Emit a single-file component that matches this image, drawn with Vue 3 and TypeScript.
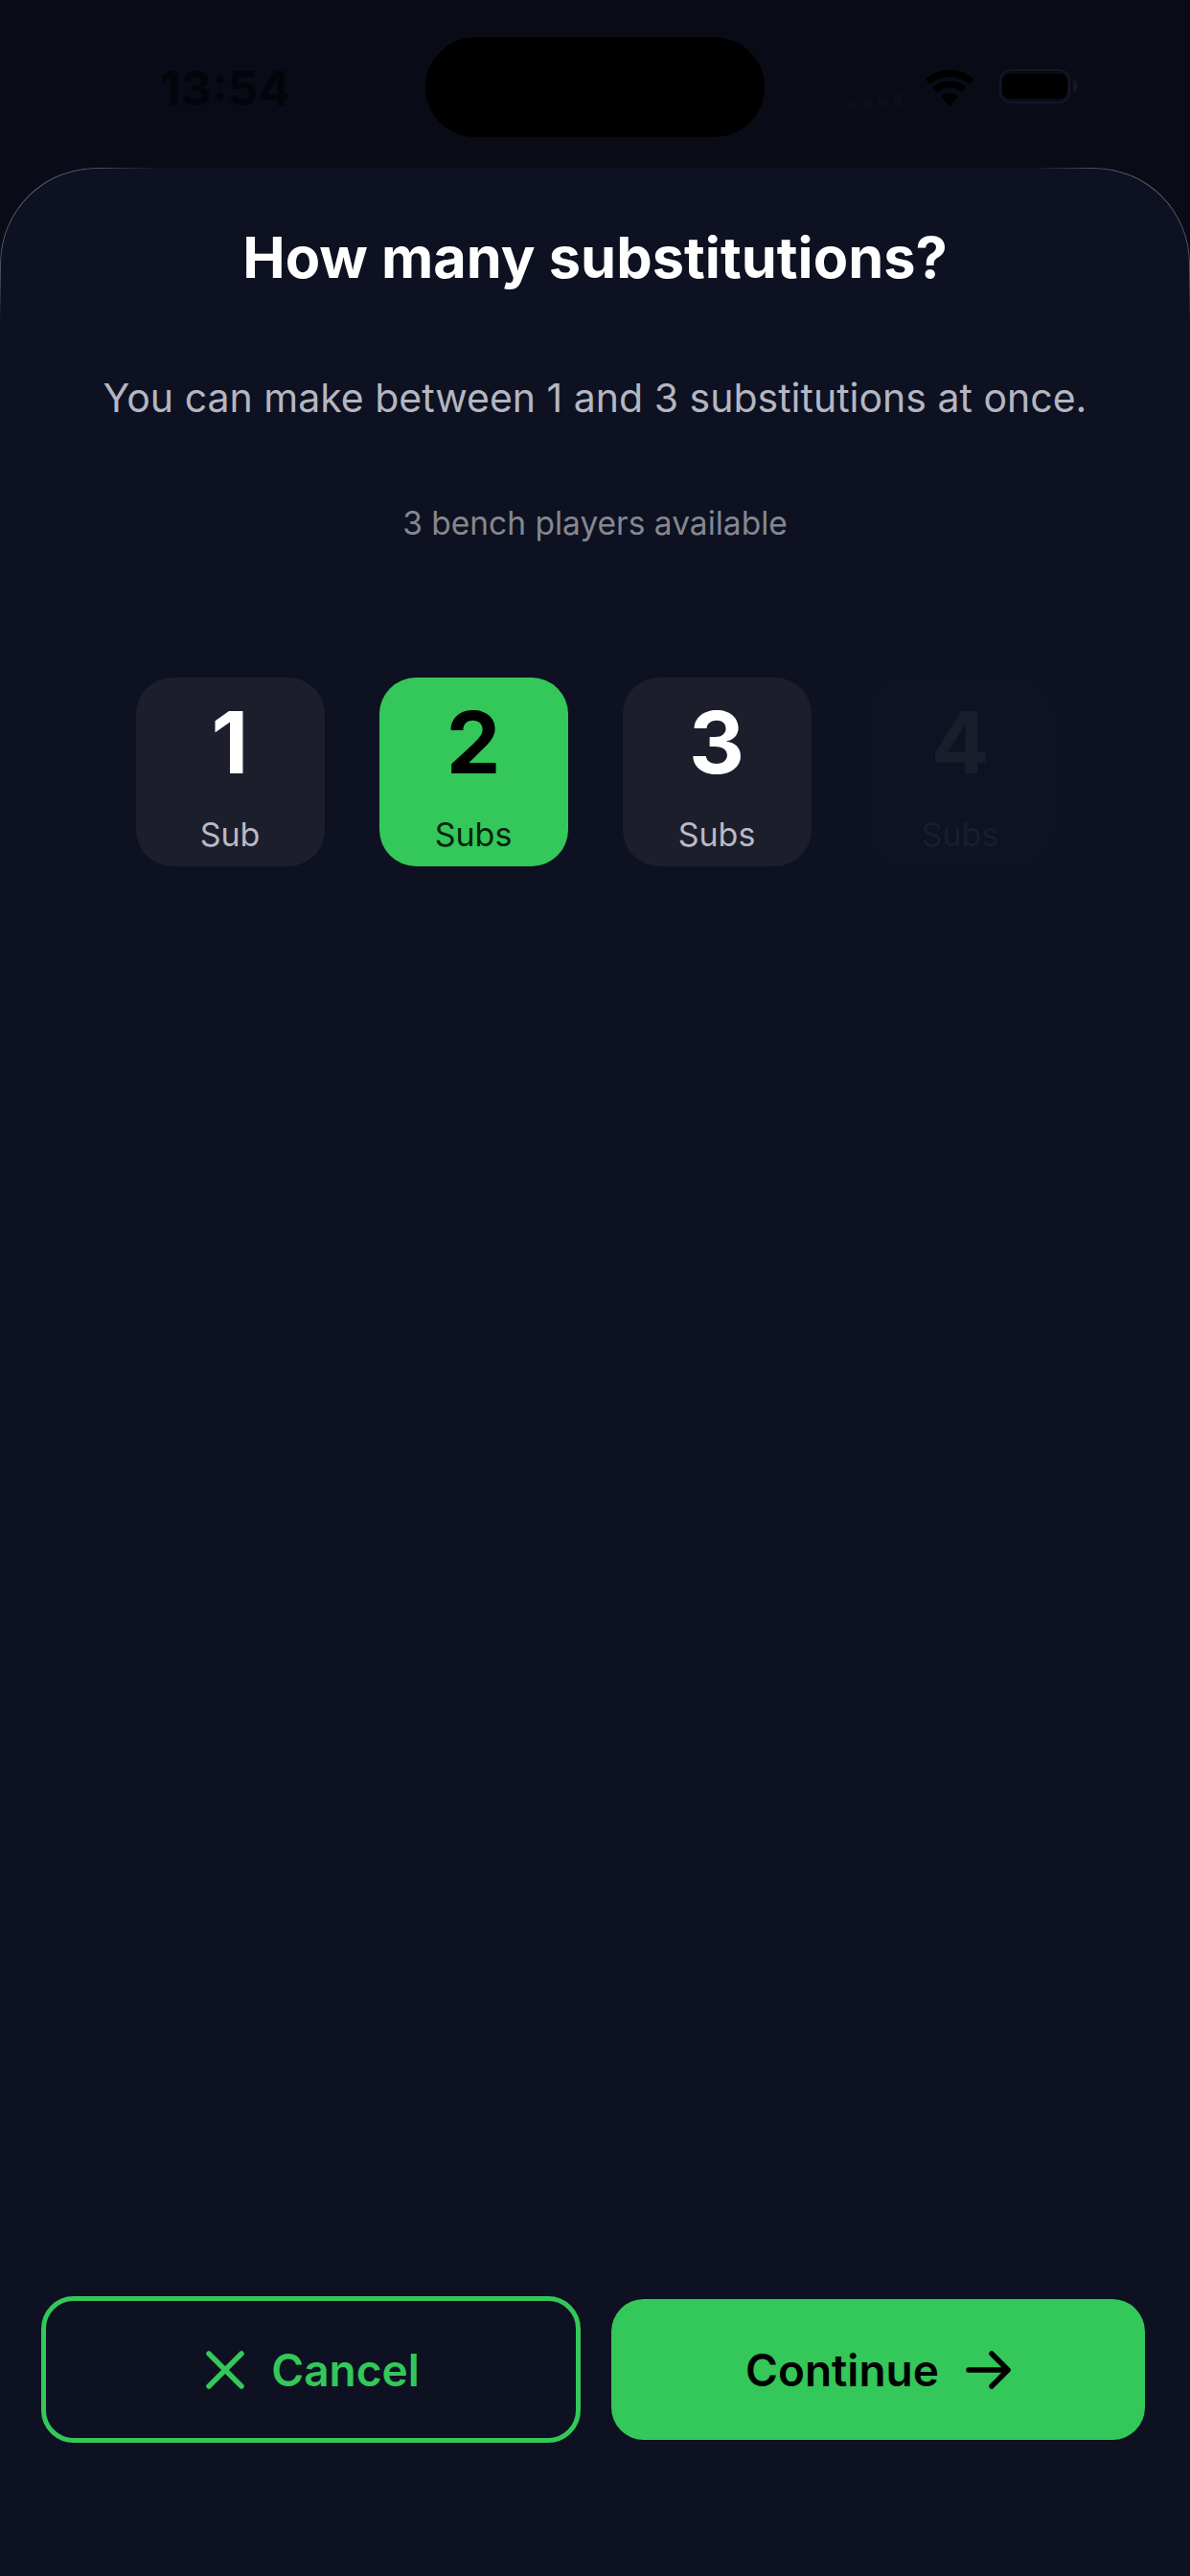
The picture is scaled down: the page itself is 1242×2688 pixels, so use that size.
<script setup lang="ts">
interface Option {
  value: number
  label: string
  selected?: boolean
  disabled?: boolean
}

const options: Option[] = [
  { value: 1, label: 'Sub' },
  { value: 2, label: 'Subs', selected: true },
  { value: 3, label: 'Subs' },
  { value: 4, label: 'Subs', disabled: true },
]
</script>

<template>
  <div class="screen">
    <header class="status">
      <span class="time">13:54</span>
      <div class="island"></div>
      <div class="status-icons">
        <svg class="cell" width="60" height="14" viewBox="0 0 60 14">
          <rect x="0" y="9" width="9" height="5" rx="1" />
          <rect x="16" y="6" width="9" height="8" rx="1" />
          <rect x="32" y="3" width="9" height="11" rx="1" />
          <rect x="48" y="0" width="9" height="14" rx="1" />
        </svg>
        <svg class="wifi" width="52" height="40" viewBox="0 0 52 40">
          <path d="M26 40 L17 29.5 A14 14 0 0 1 35 29.5 Z" fill="#000" />
          <path d="M3 14 A35 35 0 0 1 49 14" fill="none" stroke="#000" stroke-width="7" />
          <path d="M11 22.5 A23 23 0 0 1 41 22.5" fill="none" stroke="#000" stroke-width="7" />
        </svg>
        <div class="battery"><div class="battery-fill"></div></div>
      </div>
    </header>

    <main class="sheet">
      <div class="sheet-edge"></div>
      <h1 class="title">How many substitutions?</h1>
      <p class="subtitle">You can make between 1 and 3 substitutions at once.</p>
      <p class="bench">3 bench players available</p>

      <div class="options">
        <button
          v-for="option in options"
          :key="option.value"
          class="option"
          :class="{ selected: option.selected, disabled: option.disabled }"
          type="button"
        >
          <span class="num">{{ option.value }}</span>
          <span class="label">{{ option.label }}</span>
        </button>
      </div>

      <div class="actions">
        <button class="btn cancel" type="button">
          <svg width="40" height="40" viewBox="0 0 40 40" fill="none" stroke="#34c759" stroke-width="5.5" stroke-linecap="round">
            <path d="M3 3 L37 37 M37 3 L3 37" />
          </svg>
          <span>Cancel</span>
        </button>
        <button class="btn continue" type="button">
          <span>Continue</span>
          <svg width="47" height="40" viewBox="0 0 47 40" fill="none" stroke="#000" stroke-width="5.5" stroke-linecap="round" stroke-linejoin="round">
            <path d="M3 20 H44 M27 3 L44 20 L27 37" />
          </svg>
        </button>
      </div>
    </main>
  </div>
</template>

<style>
html,
body {
  margin: 0;
  background: #0a0d18;
}
</style>

<style scoped>
.screen {
  width: 1242px;
  height: 2688px;
  display: flex;
  flex-direction: column;
  overflow: hidden;
  background: #090c16;
  font-family: Inter, "Liberation Sans", sans-serif;
}

.status {
  position: relative;
  flex: 0 0 175px;
  display: flex;
  align-items: flex-start;
  justify-content: space-between;
  padding: 62px 125px 0 167px;
  box-sizing: border-box;
}

.time {
  font-size: 50px;
  line-height: 60px;
  font-weight: 700;
  color: #03050b;
}

.island {
  position: absolute;
  left: 444px;
  top: 39px;
  width: 354px;
  height: 104px;
  border-radius: 52px;
  background: #000;
}

.status-icons {
  display: flex;
  align-items: flex-start;
  margin-top: 9px;
}

.cell {
  margin: 27px 20px 0 0;
  fill: #0c0f1c;
}

.wifi {
  margin-right: 26px;
}

.battery {
  position: relative;
  width: 74px;
  height: 36px;
  margin-top: 1px;
  padding: 3px 1px;
  box-sizing: border-box;
  border: 2px solid #141825;
  border-radius: 12px;
}

.battery::after {
  content: "";
  position: absolute;
  right: -9px;
  top: 10px;
  width: 4px;
  height: 12px;
  border-radius: 0 3px 3px 0;
  background: #141825;
}

.battery-fill {
  width: 100%;
  height: 100%;
  background: #000;
  border-radius: 8px;
}

.sheet {
  position: relative;
  flex: 1;
  display: flex;
  flex-direction: column;
  align-items: center;
  box-sizing: border-box;
  padding: 57px 0 139px;
  background: #0d1121;
  border-radius: 100px 100px 0 0;
}

.sheet-edge {
  position: absolute;
  left: 0;
  right: 0;
  top: 0;
  height: 165px;
  box-sizing: border-box;
  border: 1.5px solid rgba(255, 255, 255, 0.34);
  border-bottom: 0;
  border-radius: 100px 100px 0 0;
  -webkit-mask-image:
    linear-gradient(to right, #000 0, #000 80px, transparent 165px, transparent 1077px, #000 1162px, #000 100%),
    linear-gradient(to bottom, #000 0, #000 90px, transparent 160px);
  mask-image:
    linear-gradient(to right, #000 0, #000 80px, transparent 165px, transparent 1077px, #000 1162px, #000 100%),
    linear-gradient(to bottom, #000 0, #000 90px, transparent 160px);
  -webkit-mask-composite: source-in;
  mask-composite: intersect;
}

.title {
  margin: 0;
  font-size: 59.5px;
  line-height: 72px;
  font-weight: 700;
  color: #fff;
}

.subtitle {
  margin: 84px 0 0;
  font-size: 41px;
  line-height: 54px;
  font-weight: 400;
  color: #b4b6c0;
}

.bench {
  margin: 82px 0 0;
  font-size: 33.5px;
  line-height: 44px;
  font-weight: 400;
  color: #85878f;
}

.options {
  display: flex;
  gap: 57px;
  margin-top: 139px;
}

.option {
  width: 197px;
  height: 197px;
  display: flex;
  flex-direction: column;
  align-items: center;
  padding: 0;
  border: 0;
  border-radius: 38px;
  background: #1c1e2c;
  font-family: inherit;
  color: #fff;
}

.num {
  margin-top: 14px;
  font-size: 90px;
  line-height: 108px;
  font-weight: 700;
}

.label {
  margin-top: 22px;
  font-size: 34px;
  line-height: 40px;
  color: #b9bac4;
}

.option.selected {
  background: #34c759;
  color: #000;
}

.option.selected .label {
  color: #04230f;
}

.option.disabled {
  background: #0e1222;
  color: #1a1d2b;
}

.option.disabled .label {
  color: #1a1d2b;
}

.actions {
  margin-top: auto;
  align-self: stretch;
  display: flex;
  align-items: center;
  gap: 32px;
  padding-left: 43px;
}

.btn {
  display: flex;
  align-items: center;
  justify-content: center;
  box-sizing: border-box;
  padding: 0;
  font-family: inherit;
  font-size: 46px;
  line-height: 58px;
  font-weight: 600;
  border-radius: 34px;
}

.cancel {
  width: 563px;
  height: 153px;
  gap: 28px;
  padding-left: 4px;
  border: 5.5px solid #34c759;
  background: transparent;
  color: #34c759;
}

.continue {
  width: 557px;
  height: 147px;
  gap: 28px;
  border: 0;
  background: #34c759;
  color: #000;
}
</style>
